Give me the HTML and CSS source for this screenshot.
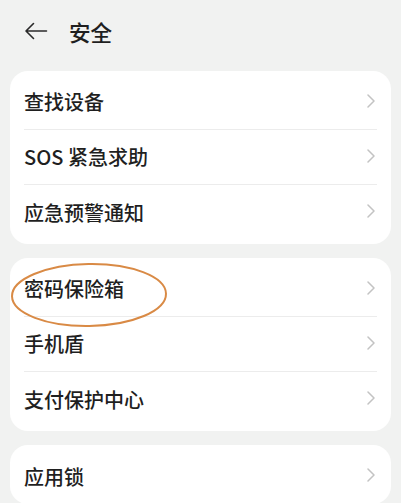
FILE: index.html
```html
<!DOCTYPE html>
<html lang="zh">
<head>
<meta charset="utf-8">
<link rel="stylesheet" href="styles.css">
</head>
<body>
<header class="header">
  <svg class="back" width="24" height="18" viewBox="0 0 24 18"><path d="M22.5 9H2.5M9.5 1.5L2 9l7.5 7.5" fill="none" stroke="#2a2a2a" stroke-width="1.6" stroke-linecap="round" stroke-linejoin="round"/></svg>
  <span class="title">安全</span>
</header>
<main class="list">
  <section class="card">
    <div class="row"><span>查找设备</span><svg class="chev" width="8" height="14" viewBox="0 0 8 14"><path d="M1 1l6 6-6 6" fill="none" stroke="#c3c3c3" stroke-width="1.5" stroke-linecap="round" stroke-linejoin="round"/></svg></div>
    <div class="row"><span>SOS 紧急求助</span><svg class="chev" width="8" height="14" viewBox="0 0 8 14"><path d="M1 1l6 6-6 6" fill="none" stroke="#c3c3c3" stroke-width="1.5" stroke-linecap="round" stroke-linejoin="round"/></svg></div>
    <div class="row"><span>应急预警通知</span><svg class="chev" width="8" height="14" viewBox="0 0 8 14"><path d="M1 1l6 6-6 6" fill="none" stroke="#c3c3c3" stroke-width="1.5" stroke-linecap="round" stroke-linejoin="round"/></svg></div>
  </section>
  <section class="card">
    <svg class="mark" width="160" height="68" viewBox="0 0 160 68"><ellipse cx="80" cy="34" rx="77" ry="31" fill="none" stroke="#d98a45" stroke-width="2" transform="rotate(-1 80 34)"/></svg>
    <div class="row"><span>密码保险箱</span><svg class="chev" width="8" height="14" viewBox="0 0 8 14"><path d="M1 1l6 6-6 6" fill="none" stroke="#c3c3c3" stroke-width="1.5" stroke-linecap="round" stroke-linejoin="round"/></svg></div>
    <div class="row"><span>手机盾</span><svg class="chev" width="8" height="14" viewBox="0 0 8 14"><path d="M1 1l6 6-6 6" fill="none" stroke="#c3c3c3" stroke-width="1.5" stroke-linecap="round" stroke-linejoin="round"/></svg></div>
    <div class="row"><span>支付保护中心</span><svg class="chev" width="8" height="14" viewBox="0 0 8 14"><path d="M1 1l6 6-6 6" fill="none" stroke="#c3c3c3" stroke-width="1.5" stroke-linecap="round" stroke-linejoin="round"/></svg></div>
  </section>
  <section class="card card-last">
    <div class="row"><span>应用锁</span><svg class="chev" width="8" height="14" viewBox="0 0 8 14"><path d="M1 1l6 6-6 6" fill="none" stroke="#c3c3c3" stroke-width="1.5" stroke-linecap="round" stroke-linejoin="round"/></svg></div>
  </section>
</main>
</body>
</html>
```
FILE: styles.css
```css
html, body {
  margin: 0;
  padding: 0;
  background: #f1f2f1;
  overflow: hidden;
  height: 503px;
}
body {
  font-family: "Noto Sans CJK SC", "Noto Sans", sans-serif;
  color: #1f1f1f;
}
.header {
  height: 62px;
  display: flex;
  align-items: center;
  padding-left: 24px;
  gap: 21px;
}
.back { display: block; }
.title {
  font-size: 21.5px;
  font-weight: 500;
  line-height: 1;
  margin-top: 2px;
}
.list {
  padding: 9px 10px 0;
  display: flex;
  flex-direction: column;
  gap: 14px;
}
.card {
  position: relative;
  background: #ffffff;
  border-radius: 18px;
  padding: 4px 0;
}
.card-last {
  padding-bottom: 0;
}
.row {
  height: 55px;
  display: flex;
  align-items: center;
  justify-content: space-between;
  margin: 0 14px 0 14px;
  font-size: 20px;
  font-weight: 500;
  border-bottom: 1px solid #ececec;
  box-sizing: border-box;
}
.row:last-child { border-bottom: none; }
.row span { line-height: 1; }
.chev {
  display: block;
  margin-right: 2px;
  margin-top: -3px;
}
.mark {
  position: absolute;
  left: -1px;
  top: 3px;
  pointer-events: none;
}
```
